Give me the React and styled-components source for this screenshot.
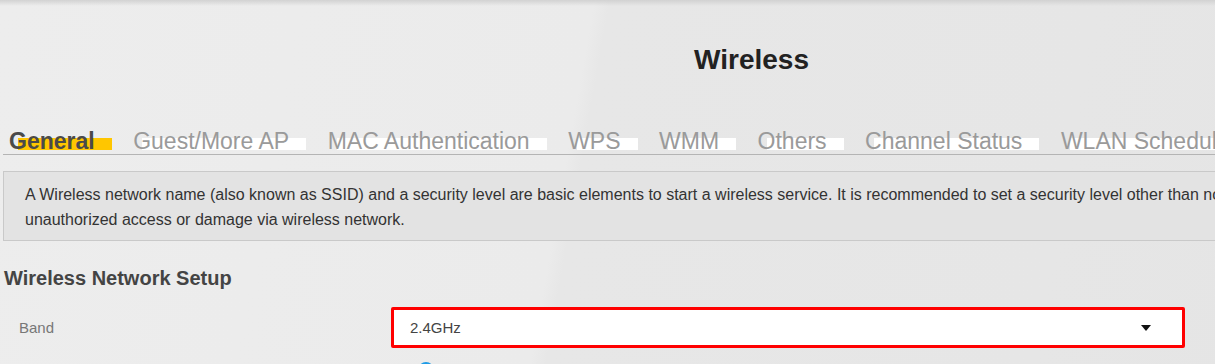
import React from 'react';
import styled, { createGlobalStyle } from 'styled-components';

const GlobalStyle = createGlobalStyle`
  html, body {
    margin: 0;
    padding: 0;
    overflow: hidden;
    background: #ebebeb;
  }
  body {
    font-family: "Liberation Sans", Arial, sans-serif;
  }
`;

const tabs = [
  'General',
  'Guest/More AP',
  'MAC Authentication',
  'WPS',
  'WMM',
  'Others',
  'Channel Status',
  'WLAN Scheduler',
];

const Page = styled.div`
  position: relative;
  width: 1500px;
  height: 364px;
  box-sizing: border-box;
  padding: 0 0 0 3px;
  background: linear-gradient(100deg, #ededed 0%, #ebebeb 38%, #e7e7e7 39%, #e6e6e6 70%, #e4e4e4 100%);
`;

const TopShade = styled.div`
  height: 6px;
  margin-left: -3px;
  background: linear-gradient(#d2d2d2, rgba(235, 235, 235, 0));
`;

const Title = styled.h1`
  margin: 38px 0 0;
  font-size: 28px;
  line-height: 32px;
  font-weight: bold;
  color: #222222;
  text-align: center;
`;

const TabBar = styled.div`
  display: flex;
  gap: 38.5px;
  margin-top: 52px;
  padding-left: 6px;
  border-bottom: 1px solid #b4b4b4;
  white-space: nowrap;
`;

const Tab = styled.span`
  position: relative;
  isolation: isolate;
  font-size: 23px;
  line-height: 26px;
  font-weight: ${p => (p.$active ? 'bold' : 'normal')};
  color: ${p => (p.$active ? '#4a4a4a' : '#9a9a9a')};
  &::before {
    content: '';
    position: absolute;
    z-index: -1;
    left: 9px;
    right: -17px;
    top: 10px;
    height: 12px;
    background: ${p => (p.$active ? '#ffc600' : '#ffffff')};
  }
`;

const Notice = styled.div`
  margin-top: 16px;
  padding: 10px 20px 8px 21px;
  border: 1px solid #c9c9c9;
  background: #e3e3e3;
  font-size: 16px;
  line-height: 25px;
  color: #333333;
  white-space: nowrap;
`;

const SectionTitle = styled.h2`
  margin: 25px 0 0 1px;
  font-size: 20px;
  line-height: 24px;
  font-weight: bold;
  color: #444444;
`;

const FieldRow = styled.div`
  display: flex;
  align-items: center;
  margin-top: 17px;
`;

const Label = styled.div`
  width: 388px;
  box-sizing: border-box;
  padding-left: 16px;
  font-size: 15px;
  color: #777777;
`;

const Select = styled.div`
  width: 794px;
  height: 41px;
  box-sizing: border-box;
  display: flex;
  align-items: center;
  justify-content: space-between;
  padding: 0 31px 0 16px;
  border: 3px solid #ff0000;
  border-radius: 2px;
  background: #ffffff;
  font-size: 15px;
  color: #444444;
`;

const Caret = styled.span`
  width: 0;
  height: 0;
  border-left: 5px solid transparent;
  border-right: 5px solid transparent;
  border-top: 6px solid #111111;
`;

const RadioRow = styled.div`
  display: flex;
  margin-top: 14px;
  padding-left: 415px;
`;

const Radio = styled.span`
  width: 16px;
  height: 16px;
  box-sizing: border-box;
  border-radius: 50%;
  border: 5px solid #1e9be6;
  background: #ffffff;
`;

export default function App() {
  return (
    <>
      <GlobalStyle />
      <Page>
        <TopShade />
        <Title>Wireless</Title>
        <TabBar>
          {tabs.map((t, i) => (
            <Tab key={t} $active={i === 0}>{t}</Tab>
          ))}
        </TabBar>
        <Notice>
          A Wireless network name (also known as SSID) and a security level are basic elements to start a wireless service. It is recommended to set a security level other than none to prevent
          <br />
          unauthorized access or damage via wireless network.
        </Notice>
        <SectionTitle>Wireless Network Setup</SectionTitle>
        <FieldRow>
          <Label>Band</Label>
          <Select>
            <span>2.4GHz</span>
            <Caret />
          </Select>
        </FieldRow>
        <RadioRow>
          <Radio />
        </RadioRow>
      </Page>
    </>
  );
}
